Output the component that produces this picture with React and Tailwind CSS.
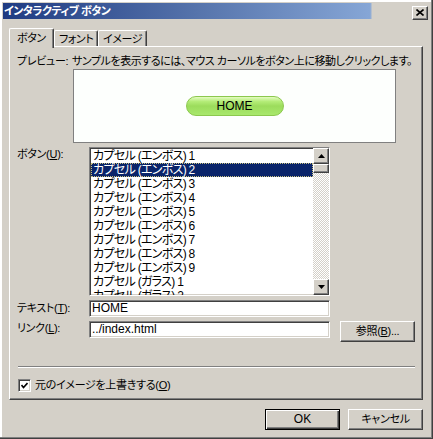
const raised =
  'border-t border-l border-r border-b border-t-white border-l-white border-r-[#404040] border-b-[#404040] shadow-[inset_-1px_-1px_0_#808080]'
const sunken =
  'border border-t-[#808080] border-l-[#808080] border-r-white border-b-white shadow-[inset_1px_1px_0_#404040,inset_-1px_-1px_0_#d4d0c8]'
const jp = 'text-[11px] tracking-[-0.3px] whitespace-nowrap'

const items = [
  'カプセル (エンボス) 1',
  'カプセル (エンボス) 2',
  'カプセル (エンボス) 3',
  'カプセル (エンボス) 4',
  'カプセル (エンボス) 5',
  'カプセル (エンボス) 6',
  'カプセル (エンボス) 7',
  'カプセル (エンボス) 8',
  'カプセル (エンボス) 9',
  'カプセル (ガラス) 1',
  'カプセル (ガラス) 2',
  'カプセル (ガラス) 3',
]

function Arrow({ down }) {
  return (
    <svg width="7" height="4" viewBox="0 0 7 4">
      {down ? <polygon points="0,0 7,0 3.5,4" fill="#000" /> : <polygon points="3.5,0 7,4 0,4" fill="#000" />}
    </svg>
  )
}

function Tab({ label, active, width }) {
  if (active) {
    return (
      <div
        style={{ width }}
        className="relative z-10 -mb-[2px] h-[20px] shrink-0 whitespace-nowrap rounded-t-[2px] bg-[#d4d0c8] border-t border-l border-r border-t-white border-l-white border-r-[#404040] shadow-[inset_-1px_0_0_#808080] pl-[7px] pt-[3px] text-[11px] leading-[13px] tracking-[-0.4px]"
      >
        {label}
      </div>
    )
  }
  return (
    <div
      style={{ width }}
      className="h-[16px] shrink-0 whitespace-nowrap rounded-t-[2px] border-t border-l border-r border-t-white border-l-white border-r-[#404040] shadow-[inset_-1px_0_0_#808080] pl-[4px] pt-[2px] text-[11px] leading-[13px] tracking-[-0.4px]"
    >
      {label}
    </div>
  )
}

function ListBox() {
  return (
    <div className={`${sunken} relative flex h-[149px] w-[241px] shrink-0 bg-white`}>
      <div className="flex-1 overflow-hidden pt-[1px] pl-[1px]">
        {items.map((item, i) =>
          i === 1 ? (
            <div
              key={item}
              className="h-[14px] whitespace-nowrap border border-dotted border-[#c8c080] bg-[#0a246a] pl-[1px] text-[12px] leading-[12px] tracking-[-0.7px] text-white"
            >
              {item}
            </div>
          ) : (
            <div key={item} className="h-[14px] whitespace-nowrap pl-[2px] text-[12px] leading-[14px] tracking-[-0.7px]">
              {item}
            </div>
          ),
        )}
      </div>
      <div className="flex w-[16px] flex-col bg-[repeating-conic-gradient(#ffffff_0%_25%,#d4d0c8_0%_50%)] bg-[length:2px_2px]">
        <div className={`${raised} flex h-[16px] items-center justify-center bg-[#d4d0c8]`}>
          <Arrow />
        </div>
        <div className={`${raised} h-[9px] bg-[#d4d0c8]`} />
        <div className="flex-1" />
        <div className={`${raised} flex h-[16px] items-center justify-center bg-[#d4d0c8]`}>
          <Arrow down />
        </div>
      </div>
    </div>
  )
}

export default function App() {
  return (
    <div className="relative h-[439px] w-[433px] overflow-hidden bg-[#d4d0c8] text-[12px] text-black [font-family:'Liberation_Sans','Noto_Sans_CJK_JP',sans-serif] [font-feature-settings:'palt'] shadow-[inset_-1px_-1px_0_#404040,inset_-2px_-2px_0_#808080,inset_2px_2px_0_#ffffff]">
      {/* title bar */}
      <div className="ml-[3px] mr-[3px] mt-[3px] flex h-[16px] items-center justify-between bg-[linear-gradient(90deg,#1f3b82_0%,#5573ab_45%,#86a6d6_86%,#d4d0c8_86.5%)]">
        <span className="whitespace-nowrap pl-[1px] text-[11px] font-bold leading-[14px] tracking-[-0.5px] text-white">
          インタラクティブ ボタン
        </span>
        <div className={`${raised} mr-[2px] mt-[3px] flex h-[14px] w-[16px] items-center justify-center bg-[#d4d0c8]`}>
          <svg width="8" height="7" viewBox="0 0 8 7">
            <path d="M0.5 0.5 L7.5 6.5 M7.5 0.5 L0.5 6.5" stroke="#000" strokeWidth="1.6" />
          </svg>
        </div>
      </div>

      {/* tabs */}
      <div className="ml-[9px] mt-[9px] flex h-[18px] items-end">
        <Tab label="ボタン" active width={45} />
        <Tab label="フォント" width={44} />
        <Tab label="イメージ" width={49} />
      </div>

      {/* panel */}
      <div className="ml-[9px] h-[354px] w-[414px] border-t border-l border-r border-b border-t-white border-l-white border-r-[#404040] border-b-[#404040] shadow-[inset_-1px_-1px_0_#808080] pl-[7px]">
        <div className="mt-[8px] flex leading-[13px]">
          <span className={`${jp} w-[55px] shrink-0`}>プレビュー:</span>
          <span className="whitespace-nowrap text-[11px] tracking-[-0.45px]">
            サンプルを表示するには、マウス カーソルをボタン上に移動しクリックします。
          </span>
        </div>
        <div className="ml-[56px] mt-[1px] flex h-[74px] w-[323px] items-center justify-center border border-[#808080] bg-[#fdfffd]">
          <div className="flex h-[20px] w-[98px] items-center justify-center rounded-full border border-[#8cc84e] bg-[linear-gradient(180deg,#e4fcc0_0%,#b4ec78_25%,#9cdc5c_50%,#a8e86c_100%)] leading-[14px]">
            HOME
          </div>
        </div>

        <div className="mt-[4px] flex">
          <span className={`${jp} w-[72px] shrink-0 pt-[1px] leading-[13px]`}>
            ボタン(<span className="underline">U</span>):
          </span>
          <ListBox />
        </div>

        <div className="mt-[4px] flex items-center">
          <span className={`${jp} w-[72px] shrink-0 leading-[13px]`}>
            テキスト(<span className="underline">T</span>):
          </span>
          <div className={`${sunken} h-[17px] w-[241px] shrink-0 bg-white pl-[2px] leading-[14px]`}>HOME</div>
        </div>

        <div className="mt-[4px] flex items-start">
          <span className={`${jp} w-[72px] shrink-0 pt-[1px] leading-[13px]`}>
            リンク(<span className="underline">L</span>):
          </span>
          <div className={`${sunken} h-[17px] w-[241px] shrink-0 bg-white pl-[2px] leading-[14px]`}>../index.html</div>
          <div className={`${raised} ${jp} ml-[10px] flex h-[21px] w-[75px] shrink-0 items-center justify-center leading-[13px]`}>
            参照(<span className="underline">B</span>)...
          </div>
        </div>

        <div className="ml-[1px] mt-[24px] h-[2px] w-[397px] border-t border-b border-t-[#808080] border-b-white" />

        <div className="ml-[1px] mt-[11px] flex items-center">
          <div className={`${sunken} flex h-[13px] w-[13px] shrink-0 items-center justify-center bg-white`}>
            <svg width="7" height="7" viewBox="0 0 7 7">
              <path d="M0.5 3 L2.5 5.5 L6.5 1" stroke="#000" strokeWidth="1.6" fill="none" />
            </svg>
          </div>
          <span className={`${jp} ml-[4px] leading-[13px]`}>
            元のイメージを上書きする(<span className="underline">O</span>)
          </span>
        </div>
      </div>

      {/* footer buttons */}
      <div className="mt-[9px] flex justify-end gap-[8px] pr-[10px]">
        <div className="flex h-[21px] w-[75px] items-center justify-center border border-black shadow-[inset_1px_1px_0_#ffffff,inset_-1px_-1px_0_#404040,inset_-2px_-2px_0_#808080] leading-[13px]">
          OK
        </div>
        <div className={`${raised} ${jp} flex h-[21px] w-[75px] items-center justify-center leading-[13px]`}>キャンセル</div>
      </div>
    </div>
  )
}
